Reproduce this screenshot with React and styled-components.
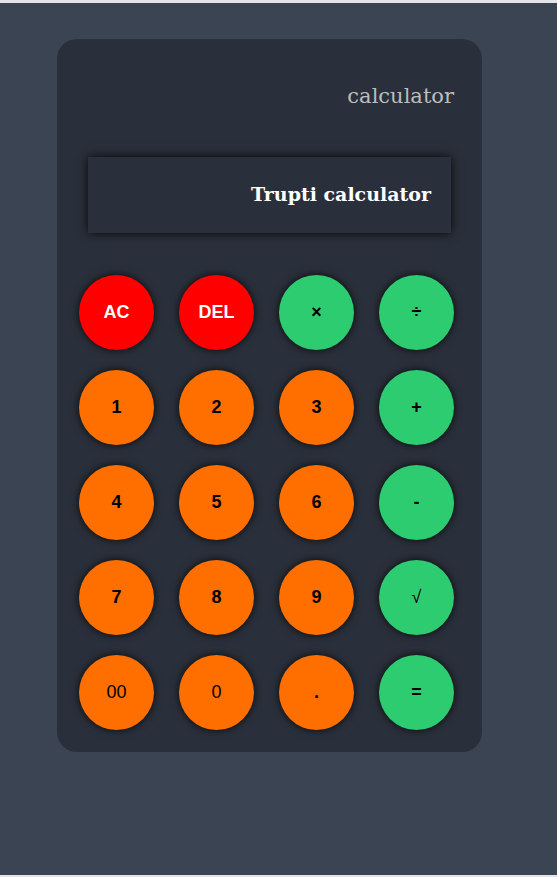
import React from 'react'
import styled, { createGlobalStyle } from 'styled-components'

const GlobalStyle = createGlobalStyle`
  body {
    margin: 0;
    background: #e4e5e8;
  }
`

const keys = [
  { label: 'AC', kind: 'clear' },
  { label: 'DEL', kind: 'clear' },
  { label: '×', kind: 'op' },
  { label: '÷', kind: 'op' },
  { label: '1', kind: 'num' },
  { label: '2', kind: 'num' },
  { label: '3', kind: 'num' },
  { label: '+', kind: 'op' },
  { label: '4', kind: 'num' },
  { label: '5', kind: 'num' },
  { label: '6', kind: 'num' },
  { label: '-', kind: 'op' },
  { label: '7', kind: 'num' },
  { label: '8', kind: 'num' },
  { label: '9', kind: 'num' },
  { label: '√', kind: 'op', light: true },
  { label: '00', kind: 'num', light: true },
  { label: '0', kind: 'num', light: true },
  { label: '.', kind: 'num' },
  { label: '=', kind: 'op' },
]

const colors = {
  clear: '#ff0000',
  op: '#2ecc71',
  num: '#ff6f00',
}

const App = () => {
  return (
    <>
      <GlobalStyle />
      <Page>
        <Card>
          <Title>calculator</Title>
          <Screen>Trupti calculator</Screen>
          <Keys>
            {keys.map((k) => (
              <Key key={k.label} kind={k.kind} light={k.light}>
                {k.label}
              </Key>
            ))}
          </Keys>
        </Card>
      </Page>
    </>
  )
}

export default App

const Page = styled.div`
  margin-top: 3px;
  height: 872px;
  background: #3b4452;
  padding: 36px 0 0 57px;
  box-sizing: border-box;
`
const Card = styled.div`
  width: 425px;
  height: 713px;
  box-sizing: border-box;
  background: #2a303b;
  border-radius: 20px;
  padding: 42px 28px 0 22px;
  display: flex;
  flex-direction: column;
`
const Title = styled.div`
  text-align: right;
  font-family: 'DejaVu Serif', serif;
  font-size: 21px;
  line-height: 30px;
  color: #bdbdbd;
`
const Screen = styled.div`
  margin: 46px 3px 0 9px;
  height: 76px;
  box-sizing: border-box;
  padding: 0 20px 2px 0;
  display: flex;
  align-items: center;
  justify-content: flex-end;
  background: #2a303b;
  box-shadow: 0 0 10px rgba(0, 0, 0, 0.9);
  font-family: 'DejaVu Serif', serif;
  font-weight: bold;
  font-size: 19px;
  color: #ffffff;
`
const Keys = styled.div`
  margin-top: 42px;
  display: grid;
  grid-template-columns: repeat(4, 75px);
  grid-auto-rows: 75px;
  column-gap: 25px;
  row-gap: 20px;
`
const Key = styled.div`
  width: 75px;
  height: 75px;
  border-radius: 50%;
  background: ${(props) => colors[props.kind]};
  color: ${(props) => (props.kind === 'clear' ? '#ffffff' : '#000000')};
  box-shadow: 0 0 8px rgba(0, 0, 0, 0.85);
  display: flex;
  align-items: center;
  justify-content: center;
  font-family: 'Liberation Sans', Arial, sans-serif;
  font-size: 18px;
  font-weight: ${(props) => (props.light ? 'normal' : 'bold')};
`
